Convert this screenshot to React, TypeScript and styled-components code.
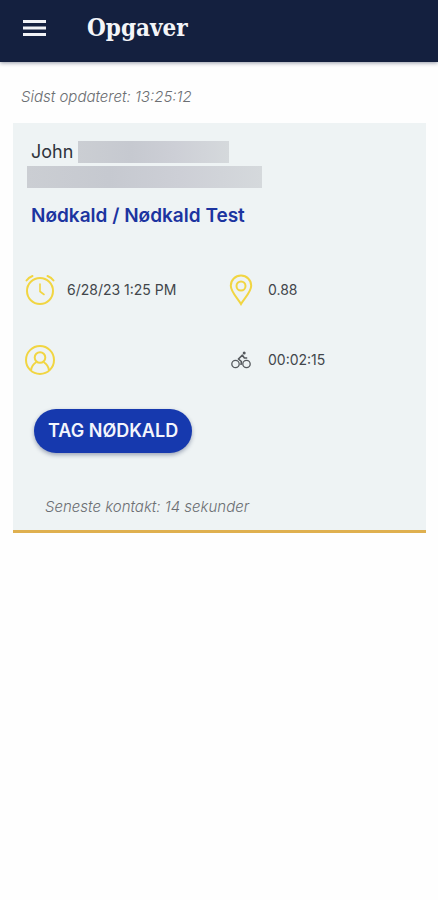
import React from "react";
import styled, { createGlobalStyle } from "styled-components";

const GlobalStyle = createGlobalStyle`
  * { box-sizing: border-box; }
  body {
    margin: 0;
    background: #fefefe;
    color: #3c4045;
    font-family: Inter, "Liberation Sans", sans-serif;
  }
  h1, h2, p, dl, dd, dt { margin: 0; }
  svg { flex: none; }
`;

const AppBar = styled.header`
  display: flex;
  align-items: center;
  gap: 36px;
  height: 62px;
  padding: 0 18px 6px;
  background: #14203f;
  box-shadow: 0 1px 4px rgba(20, 32, 63, 0.45);
`;

const MenuButton = styled.button`
  display: flex;
  padding: 4px 0;
  border: 0;
  background: none;
  color: #f1f2f6;
  cursor: pointer;
`;

const Title = styled.h1`
  color: #f4f5f8;
  font: bold 24px/32px "DejaVu Serif Condensed", "DejaVu Serif", serif;
`;

const Content = styled.main`
  padding: 24px 12px 24px 13px;
`;

const Note = styled.p<{ $indent: number }>`
  padding-left: ${({ $indent }) => $indent}px;
  color: #6c6f73;
  font-size: 15px;
  font-style: italic;
  font-weight: 300;
  line-height: 22px;
`;

const Card = styled.article`
  margin-top: 15px;
  padding: 18px 12px 12px;
  border-bottom: 3px solid #dfb04f;
  background: #eef3f4;
`;

const NameRow = styled.div`
  display: flex;
  align-items: center;
  gap: 5px;
  padding-left: 6px;
  color: #30343c;
  font-size: 18px;
  line-height: 22px;
`;

const Redaction = styled.div<{ $width: number }>`
  width: ${({ $width }) => $width}px;
  max-width: 100%;
  height: 22px;
  background: linear-gradient(90deg, #cbced3, #c6c9d0 35%, #cdcfd6 65%, #d5d9dc);
`;

const AddressRow = styled.div`
  padding: 3px 0 0 2px;
`;

const TaskName = styled.h2`
  padding: 16px 0 0 6px;
  color: #1c34a0;
  font-size: 19px;
  font-weight: 600;
  line-height: 24px;
`;

const Details = styled.dl`
  display: grid;
  grid-template-columns: 201fr 188fr;
  row-gap: 38px;
  padding-top: 46px;
`;

const Detail = styled.div`
  display: flex;
  align-items: center;
  gap: 12px;
  height: 32px;
`;

const DetailIcon = styled.dt`
  display: flex;
  justify-content: center;
  width: 30px;
`;

const DetailValue = styled.dd`
  color: #42464b;
  font-size: 14px;
  line-height: 20px;
`;

const TakeButton = styled.button`
  display: block;
  height: 44px;
  margin: 33px 0 0 9px;
  padding: 0 14px;
  border: 0;
  border-radius: 22px;
  background: #1639ae;
  box-shadow: 0 2px 4px rgba(30, 45, 90, 0.4);
  color: #f3f5fc;
  font: 600 18px/24px Inter, "Liberation Sans", sans-serif;
  cursor: pointer;
`;

const Contact = styled.div`
  padding-top: 43px;
`;

const yellow = "#f1d542";

const MenuIcon = () => (
  <svg width="33" height="24" viewBox="0 0 33 24" fill="none" stroke="currentColor" strokeWidth="3" aria-hidden="true">
    <path d="M5 5.5h23M5 12h23M5 18.5h23" />
  </svg>
);

const ClockIcon = () => (
  <svg width="30" height="32" viewBox="0 0 30 32" fill="none" stroke={yellow} strokeWidth="2" strokeLinecap="round" role="img" aria-label="Tidspunkt">
    <circle cx="15" cy="17" r="13" />
    <path d="M15 10v7.500l4 3" strokeWidth="1.6" />
    <path d="M1.500 6.500Q3.500 3.500 7.500 2M28.500 6.500Q26.500 3.500 22.500 2" />
  </svg>
);

const PinIcon = () => (
  <svg width="24" height="32" viewBox="0 0 24 32" fill="none" stroke={yellow} strokeWidth="2" role="img" aria-label="Afstand">
    <path d="M12 30C9 24.5 1.800 18 1.800 11.700a10.200 10.200 0 0 1 20.400 0C22.200 18 15 24.500 12 30Z" />
    <circle cx="12" cy="12" r="4.500" />
  </svg>
);

const PersonIcon = () => (
  <svg width="32" height="32" viewBox="0 0 32 32" fill="none" stroke={yellow} strokeWidth="2" role="img" aria-label="Person">
    <circle cx="16" cy="16" r="14" />
    <circle cx="16" cy="13.5" r="5.300" />
    <path d="M7 26.500c.5-4 2.500-6.800 5.500-8.500M25 26.500c-.5-4-2.500-6.800-5.500-8.500" />
  </svg>
);

const BikeIcon = () => (
  <svg width="20" height="18" viewBox="0 0 20 18" fill="none" stroke="#55595d" strokeWidth="1.3" role="img" aria-label="Cykeltid">
    <circle cx="4.500" cy="13" r="3.700" />
    <circle cx="15.500" cy="13" r="3.700" />
    <circle cx="13.200" cy="2" r="1.500" fill="#55595d" stroke="none" />
    <path d="m10 14 .4-3.500-3-2.500 4-3.800 2 2.800h2.800" strokeWidth="1.6" strokeLinejoin="round" />
  </svg>
);

export default function App() {
  return (
    <>
      <GlobalStyle />
      <AppBar>
        <MenuButton type="button" aria-label="Menu">
          <MenuIcon />
        </MenuButton>
        <Title>Opgaver</Title>
      </AppBar>
      <Content>
        <Note $indent={8}>Sidst opdateret: 13:25:12</Note>
        <Card>
          <NameRow>
            John
            <Redaction $width={151} />
          </NameRow>
          <AddressRow>
            <Redaction $width={235} />
          </AddressRow>
          <TaskName>Nødkald / Nødkald Test</TaskName>
          <Details>
            <Detail>
              <DetailIcon><ClockIcon /></DetailIcon>
              <DetailValue>6/28/23 1:25 PM</DetailValue>
            </Detail>
            <Detail>
              <DetailIcon><PinIcon /></DetailIcon>
              <DetailValue>0.88</DetailValue>
            </Detail>
            <Detail>
              <DetailIcon><PersonIcon /></DetailIcon>
            </Detail>
            <Detail>
              <DetailIcon><BikeIcon /></DetailIcon>
              <DetailValue>00:02:15</DetailValue>
            </Detail>
          </Details>
          <TakeButton type="button">TAG NØDKALD</TakeButton>
          <Contact>
            <Note $indent={20}>Seneste kontakt: 14 sekunder</Note>
          </Contact>
        </Card>
      </Content>
    </>
  );
}
